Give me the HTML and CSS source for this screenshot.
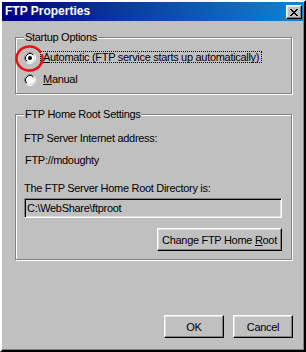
FILE: index.html
```html
<!DOCTYPE html>
<html>
<head>
<meta charset="utf-8">
<title>FTP Properties</title>
<link rel="stylesheet" href="styles.css">
</head>
<body>
<div class="window">
  <div class="titlebar">
    <span class="title">FTP Properties</span>
    <button class="close" aria-label="Close">
      <svg width="8" height="7" viewBox="0 0 8 7" shape-rendering="crispEdges"><path d="M0 0h2v1H0z M6 0h2v1H6z M1 1h2v1H1z M5 1h2v1H5z M2 2h4v1H2z M3 3h2v1H3z M2 4h4v1H2z M1 5h2v1H1z M5 5h2v1H5z M0 6h2v1H0z M6 6h2v1H6z" fill="#000"/></svg>
    </button>
  </div>
  <div class="body">
    <fieldset class="group group-startup">
      <legend>Startup Options</legend>
      <div class="radio-row">
        <span class="radio">
          <svg width="12" height="12" viewBox="0 0 12 12"><circle cx="6" cy="6" r="4.5" fill="#fff"/><circle cx="6" cy="6" r="5.5" fill="none" stroke="#fff"/><path d="M2.11 9.89A5.5 5.5 0 0 1 9.89 2.11" fill="none" stroke="#808080"/><circle cx="6" cy="6" r="4.5" fill="none" stroke="#dfdfdf"/><path d="M2.82 9.18A4.5 4.5 0 0 1 9.18 2.82" fill="none" stroke="#000"/><circle cx="6" cy="6" r="2" fill="#000"/></svg>
        </span>
        <span class="radio-label focused"><u>A</u>utomatic (FTP service starts up automatically)</span>
      </div>
      <div class="radio-row">
        <span class="radio">
          <svg width="12" height="12" viewBox="0 0 12 12"><circle cx="6" cy="6" r="4.5" fill="#fff"/><circle cx="6" cy="6" r="5.5" fill="none" stroke="#fff"/><path d="M2.11 9.89A5.5 5.5 0 0 1 9.89 2.11" fill="none" stroke="#808080"/><circle cx="6" cy="6" r="4.5" fill="none" stroke="#dfdfdf"/><path d="M2.82 9.18A4.5 4.5 0 0 1 9.18 2.82" fill="none" stroke="#000"/></svg>
        </span>
        <span class="radio-label"><u>M</u>anual</span>
      </div>
    </fieldset>

    <fieldset class="group group-root">
      <legend>FTP Home Root Settings</legend>
      <div class="label label-first">FTP Server Internet address:</div>
      <div class="label label-addr">FTP://mdoughty</div>
      <div class="label label-dir">The FTP Server Home Root Directory is:</div>
      <div class="textbox">C:\WebShare\ftproot</div>
      <div class="btn-row">
        <button class="btn btn-change">Change FTP Home <u>R</u>oot</button>
      </div>
    </fieldset>

    <div class="footer">
      <button class="btn btn-dlg">OK</button>
      <button class="btn btn-dlg">Cancel</button>
    </div>
  </div>
</div>
<svg class="annotation" width="32" height="30" viewBox="0 0 32 30"><path d="M28.06 11.39A13 12 0 1 1 26.15 7.62" fill="none" stroke="#e81010" stroke-width="2.5" stroke-linecap="round"/></svg>
</body>
</html>
```

FILE: styles.css
```css
html, body {
  margin: 0;
  padding: 0;
  background: #c0c0c0;
}

body {
  font-family: "Liberation Sans", Arial, sans-serif;
  font-size: 11px;
  line-height: 13px;
  letter-spacing: -0.3px;
  color: #000;
}

.window {
  box-sizing: border-box;
  width: 306px;
  height: 352px;
  display: flex;
  flex-direction: column;
  background: #c0c0c0;
  border-style: solid;
  border-width: 2px;
  border-color: #fff #000 #000 #fff;
  padding: 0 1px 1px 0;
  box-shadow: inset -1px -1px #808080;
}

.titlebar {
  height: 19px;
  display: flex;
  justify-content: space-between;
  align-items: flex-start;
  padding: 0 1px 0 3px;
  background: linear-gradient(to right, #000080 0%, #0a3aa0 40%, #1084d0 100%);
}

.title {
  color: #fff;
  font-weight: bold;
  font-size: 12px;
  line-height: 19px;
  letter-spacing: 0;
}

.close {
  box-sizing: border-box;
  width: 16px;
  height: 14px;
  margin-top: 3px;
  padding: 0;
  display: flex;
  align-items: center;
  justify-content: center;
  background: #c0c0c0;
  border: 1px solid;
  border-color: #fff #000 #000 #fff;
  box-shadow: inset -1px -1px #808080, inset 1px 1px #dfdfdf;
}

.close svg {
  display: block;
  margin: 0 1px 0 0;
}

.body {
  flex: 1;
  display: flex;
  flex-direction: column;
}

.group {
  box-sizing: border-box;
  width: 277px;
  margin: 0 0 0 13px;
  min-inline-size: 0;
  border: 1px solid #808080;
  box-shadow: inset 1px 1px #fff, 1px 1px #fff;
  padding: 6px 9px 5px 8px;
}

.group legend {
  padding: 0 1px;
  background: #c0c0c0;
  line-height: 13px;
}

.group-startup {
  margin-top: 10px;
}

.radio-row {
  display: flex;
  align-items: center;
  height: 16px;
}

.radio-row + .radio-row {
  margin-top: 6px;
}

.radio {
  width: 12px;
  height: 12px;
  margin-right: 4px;
}

.radio svg {
  display: block;
}

.radio-label {
  border: 1px dotted transparent;
  padding: 0 2px;
  line-height: 10px;
  margin-top: -2px;
}

.radio-label.focused {
  border-color: #000;
}

.group-root {
  margin-top: 14px;
  padding: 11px 9px 8px 8px;
}

.label {
  line-height: 13px;
  white-space: nowrap;
}

.label-addr {
  margin-top: 9px;
  padding-left: 1px;
}

.label-dir {
  margin-top: 15px;
}

.textbox {
  box-sizing: border-box;
  height: 20px;
  margin-top: 3px;
  padding: 2px 0 0 2px;
  border: 1px solid;
  border-color: #808080 #fff #fff #808080;
  box-shadow: inset 1px 1px #000, inset -1px -1px #dfdfdf;
  background: #c0c0c0;
  line-height: 14px;
}

.btn-row {
  display: flex;
  justify-content: flex-end;
  margin-top: 10px;
}

.btn {
  box-sizing: border-box;
  height: 23px;
  padding: 0;
  font-family: "Liberation Sans", Arial, sans-serif;
  font-size: 11px;
  letter-spacing: -0.3px;
  color: #000;
  background: #c0c0c0;
  border: 1px solid;
  border-color: #fff #000 #000 #fff;
  box-shadow: inset -1px -1px #808080, inset 1px 1px #dfdfdf;
}

.btn-change {
  width: 125px;
}

.btn-dlg {
  width: 60px;
}

.footer {
  margin-top: auto;
  display: flex;
  justify-content: flex-end;
  gap: 9px;
  padding: 0 10px 11px 0;
}

.annotation {
  position: absolute;
  left: 14px;
  top: 44px;
}
```
